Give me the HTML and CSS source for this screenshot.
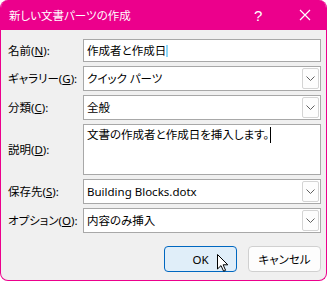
FILE: index.html
```html
<!DOCTYPE html>
<html lang="ja">
<head>
    <meta charset="UTF-8">
    <title>新しい文書パーツの作成</title>
    <link rel="stylesheet" href="styles.css">
</head>
<body>
    <div class="window">
        <!-- タイトルバー -->
        <div class="titlebar">
            <span class="title">新しい文書パーツの作成</span>
            <span class="help">?</span>
            <span class="close">
                <svg width="12" height="12" viewBox="0 0 12 12"><path d="M1 1 L11 11 M11 1 L1 11" stroke="#fff" stroke-width="1.2" fill="none"/></svg>
            </span>
        </div>

        <div class="content">
            <div class="form">
                <label class="label">名前(<u>N</u>):</label>
                <div class="field text">作成者と作成日<span class="sel"></span></div>

                <label class="label">ギャラリー(<u>G</u>):</label>
                <div class="field combo"><span class="value">クイック パーツ</span><span class="drop"><svg width="9" height="5" viewBox="0 0 9 5"><path d="M0.5 0.5 L4.5 4.5 L8.5 0.5" stroke="#606060" fill="none"/></svg></span></div>

                <label class="label">分類(<u>C</u>):</label>
                <div class="field combo"><span class="value">全般</span><span class="drop"><svg width="9" height="5" viewBox="0 0 9 5"><path d="M0.5 0.5 L4.5 4.5 L8.5 0.5" stroke="#606060" fill="none"/></svg></span></div>

                <label class="label">説明(<u>D</u>):</label>
                <div class="field area">文書の作成者と作成日を挿入します。<span class="caret"></span></div>

                <label class="label">保存先(<u>S</u>):</label>
                <div class="field combo"><span class="value">Building Blocks.dotx</span><span class="drop"><svg width="9" height="5" viewBox="0 0 9 5"><path d="M0.5 0.5 L4.5 4.5 L8.5 0.5" stroke="#606060" fill="none"/></svg></span></div>

                <label class="label">オプション(<u>O</u>):</label>
                <div class="field combo"><span class="value">内容のみ挿入</span><span class="drop"><svg width="9" height="5" viewBox="0 0 9 5"><path d="M0.5 0.5 L4.5 4.5 L8.5 0.5" stroke="#606060" fill="none"/></svg></span></div>
            </div>

            <div class="buttons">
                <button class="btn primary">OK</button>
                <button class="btn">キャンセル</button>
            </div>
        </div>

        <!-- マウスカーソル -->
        <svg class="pointer" width="12" height="18" viewBox="0 0 12 18">
            <path d="M0.5 0.5 L0.5 15 L4 11.6 L6.6 17.2 L8.6 16.3 L6.1 10.8 L10.8 10.8 Z" fill="#fff" stroke="#000" stroke-width="1" stroke-linejoin="round"/>
        </svg>
    </div>
</body>
</html>
```

FILE: styles.css
```css
body {
    margin: 0;
    padding: 0;
    background-color: #ffffff;
    font-family: "Noto Sans", "Noto Sans CJK JP", sans-serif;
    font-size: 11.5px;
    font-feature-settings: "palt";
    color: #000;
}

.window {
    position: relative;
    width: 327px;
    height: 281px;
    box-sizing: border-box;
    border: 1px solid #ec008c;
    border-top: none;
    border-radius: 8px 8px 8px 8px;
    background-color: #f0f0f0;
    overflow: hidden;
}

/* タイトルバー */
.titlebar {
    height: 30px;
    background-color: #ec008c;
    color: #fff;
    display: flex;
    align-items: center;
    padding-left: 9px;
    margin: 0 -1px;
}

.title {
    flex: 1;
    font-size: 11.5px;
}

.help {
    font-family: "Liberation Sans", sans-serif;
    font-size: 15px;
    width: 16px;
    margin-right: 29px;
}

.close {
    display: flex;
    width: 28px;
}

/* 入力欄 */
.content {
    padding: 9px 5px 0 7px;
}

.form {
    display: grid;
    grid-template-columns: 75px 1fr;
    row-gap: 4px;
    align-items: center;
}

.label {
    white-space: nowrap;
    line-height: 16px;
}

.field {
    background-color: #fff;
    border: 1px solid #a8a8a8;
    box-sizing: border-box;
    line-height: 16px;
}

.text {
    height: 23px;
    padding: 2px 3px;
    display: flex;
    align-items: center;
}

.sel {
    display: inline-block;
    width: 2px;
    height: 12px;
    background-color: #8fd8f8;
}

.combo {
    height: 25px;
    display: flex;
    align-items: center;
    padding-left: 3px;
}

.combo .value {
    flex: 1;
}

.drop {
    width: 17px;
    height: 21px;
    box-sizing: border-box;
    border: 1px solid #d4d4d4;
    border-radius: 2px;
    margin-right: 1px;
    background-color: #fdfdfd;
    display: flex;
    align-items: center;
    justify-content: center;
}

.area {
    height: 51px;
    padding: 2px 3px;
}

.caret {
    display: inline-block;
    width: 1px;
    height: 16px;
    background-color: #000;
    vertical-align: top;
    margin-left: 1px;
}

/* ボタン */
.buttons {
    display: flex;
    justify-content: flex-end;
    gap: 11px;
    margin-top: 13px;
    padding-right: 0;
}

.btn {
    width: 73px;
    height: 26px;
    font-family: "Noto Sans", "Noto Sans CJK JP", sans-serif;
    font-size: 11.5px;
    font-feature-settings: "palt";
    background-color: #fdfdfd;
    border: 1px solid #d0d0d0;
    border-radius: 4px;
    padding: 0;
    color: #000;
}

.btn.primary {
    background-color: #e0eef9;
    border-color: #0067c0;
}

.pointer {
    position: absolute;
    left: 216px;
    top: 254px;
}
```
